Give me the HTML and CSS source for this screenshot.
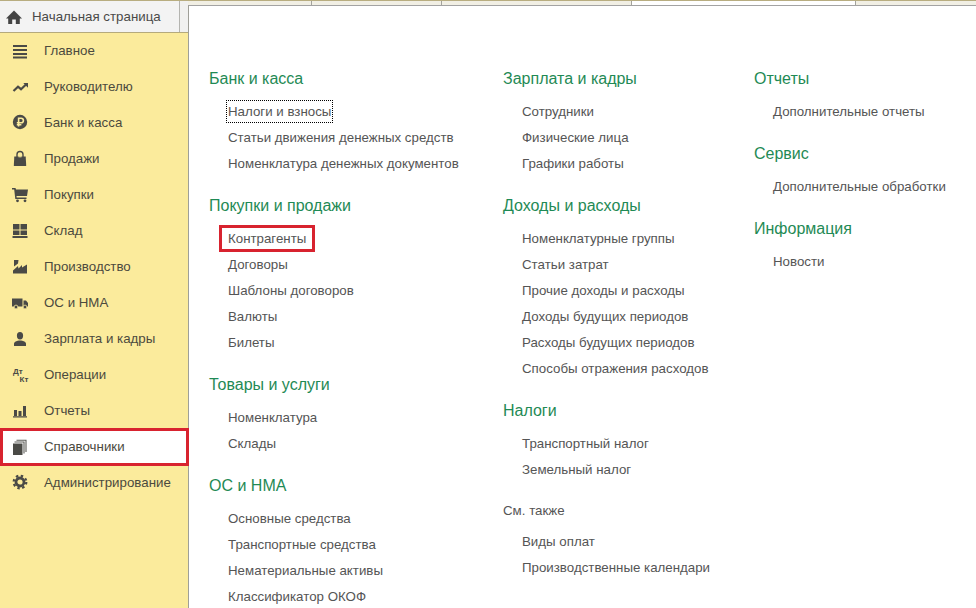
FILE: index.html
```html
<!DOCTYPE html>
<html lang="ru">
<head>
<meta charset="utf-8">
<title>Начальная страница</title>
<link rel="stylesheet" href="styles.css">
</head>
<body>
<div class="app">
  <div class="left">
    <div class="home-row">
      <div class="home-tab">
        <svg class="home-icon" viewBox="0 0 18 18"><path d="M9 2.5 17 10.5H14.8V16H10.8V11.5H7.2V16H3.2V10.5H1Z"/></svg>
        <span>Начальная страница</span>
      </div>
    </div>
    <nav class="side">
      <a class="side-item"><svg class="ico" viewBox="0 0 18 18"><path d="M2 4h14v2H2zM2 8h14v2H2zM2 12h14v2H2zM2 15.6h14v1.8H2z"/></svg><span>Главное</span></a>
      <a class="side-item"><svg class="ico" viewBox="0 0 18 18"><path class="ln" d="M2.5 14 7 9.7 10 12.2 15 7.5"/><path d="M12.3 6H17V10.7Z"/></svg><span>Руководителю</span></a>
      <a class="side-item"><svg class="ico" viewBox="0 0 18 18"><circle cx="9" cy="9" r="7.2"/><path class="ln-y" d="M7.6 13.5V5.2h2.5a2.3 2.3 0 0 1 0 4.6H5.8M5.8 11.7h4.6"/></svg><span>Банк и касса</span></a>
      <a class="side-item"><svg class="ico" viewBox="0 0 18 18"><path d="M3.300 7.500H14.700L15.200 17H2.800Z"/><path class="ln-thin" d="M6 10.500V5.500a3 3 0 0 1 6 0V10.500"/><path class="ln-y-thin" d="M7.500 7.800h3"/></svg><span>Продажи</span></a>
      <a class="side-item"><svg class="ico" viewBox="0 0 18 18"><path d="M1 3H4.500L5 4.500H17L16 11H5.500L5.700 12.500H15.500V14H4.300L3.200 4.500H1Z"/><circle cx="6.500" cy="15.800" r="1.400"/><circle cx="14" cy="15.800" r="1.400"/></svg><span>Покупки</span></a>
      <a class="side-item"><svg class="ico" viewBox="0 0 18 18"><path d="M2 3h6.500v5.500H2zM9.500 3H16v5.500H9.500zM2 9.500h6.500V14H2zM9.500 9.500H16V14H9.500zM1.500 15h15v2h-15z"/></svg><span>Склад</span></a>
      <a class="side-item"><svg class="ico" viewBox="0 0 18 18"><path d="M3 3H7.500L7 6.500 3 9.500ZM2 16.500V13.500L7 9 7.500 11.500 11 8V10.500L16 7.500V16.500Z"/></svg><span>Производство</span></a>
      <a class="side-item"><svg class="ico" viewBox="0 0 18 18"><path d="M1 5.500H11.500V13.500H1ZM12.500 7.500H15L17 10V13.500H12.500Z"/><circle class="wheel" cx="5" cy="14" r="1.900"/><circle class="wheel" cx="14" cy="14" r="1.900"/></svg><span>ОС и НМА</span></a>
      <a class="side-item"><svg class="ico" viewBox="0 0 18 18"><ellipse cx="9" cy="6.700" rx="3.100" ry="3.700"/><path d="M3 17V14.700C3 12.800 6 11.500 9 11.500S15 12.800 15 14.700V17Z"/></svg><span>Зарплата и кадры</span></a>
      <a class="side-item"><svg class="ico" viewBox="0 0 18 18"><text class="dk" x="2" y="9">Дт</text><text class="dk" x="8.500" y="17">Кт</text></svg><span>Операции</span></a>
      <a class="side-item"><svg class="ico" viewBox="0 0 18 18"><path d="M3 9h3v6H3zM7.500 10H10.500v5H7.500zM12 5h3v10h-3zM2 15.200h14v1.300H2z"/></svg><span>Отчеты</span></a>
      <a class="side-item side-marked"><svg class="ico" viewBox="0 0 18 18"><path d="M2 6.500H11.500V18H2Z"/><path class="ln-gray" d="M3.500 5H13V16.500M5.500 3.300H15V15"/></svg><span>Справочники</span></a>
      <a class="side-item"><svg class="ico" viewBox="0 0 18 18"><circle class="gear-a" cx="9" cy="9" r="4"/><circle class="gear-b" cx="9" cy="9" r="6.300"/></svg><span>Администрирование</span></a>
    </nav>
  </div>
  <div class="right">
    <div class="tabs">
      <div class="tab tab-1"></div>
      <div class="tab tab-2"></div>
      <div class="tab tab-3"></div>
      <div class="tab tab-active"></div>
      <div class="tab tab-rest"></div>
    </div>
    <main class="main">
      <div class="col col-1">
        <section class="group">
          <h3>Банк и касса</h3>
          <a class="link"><span class="focus">Налоги и взносы</span></a>
          <a class="link">Статьи движения денежных средств</a>
          <a class="link">Номенклатура денежных документов</a>
        </section>
        <section class="group">
          <h3>Покупки и продажи</h3>
          <a class="link"><span class="marked">Контрагенты</span></a>
          <a class="link">Договоры</a>
          <a class="link">Шаблоны договоров</a>
          <a class="link">Валюты</a>
          <a class="link">Билеты</a>
        </section>
        <section class="group">
          <h3>Товары и услуги</h3>
          <a class="link">Номенклатура</a>
          <a class="link">Склады</a>
        </section>
        <section class="group">
          <h3>ОС и НМА</h3>
          <a class="link">Основные средства</a>
          <a class="link">Транспортные средства</a>
          <a class="link">Нематериальные активы</a>
          <a class="link">Классификатор ОКОФ</a>
        </section>
      </div>
      <div class="col col-2">
        <section class="group">
          <h3>Зарплата и кадры</h3>
          <a class="link">Сотрудники</a>
          <a class="link">Физические лица</a>
          <a class="link">Графики работы</a>
        </section>
        <section class="group">
          <h3>Доходы и расходы</h3>
          <a class="link">Номенклатурные группы</a>
          <a class="link">Статьи затрат</a>
          <a class="link">Прочие доходы и расходы</a>
          <a class="link">Доходы будущих периодов</a>
          <a class="link">Расходы будущих периодов</a>
          <a class="link">Способы отражения расходов</a>
        </section>
        <section class="group">
          <h3>Налоги</h3>
          <a class="link">Транспортный налог</a>
          <a class="link">Земельный налог</a>
        </section>
        <section class="group group-also">
          <h4>См. также</h4>
          <a class="link">Виды оплат</a>
          <a class="link">Производственные календари</a>
        </section>
      </div>
      <div class="col col-3">
        <section class="group">
          <h3>Отчеты</h3>
          <a class="link">Дополнительные отчеты</a>
        </section>
        <section class="group">
          <h3>Сервис</h3>
          <a class="link">Дополнительные обработки</a>
        </section>
        <section class="group">
          <h3>Информация</h3>
          <a class="link">Новости</a>
        </section>
      </div>
    </main>
  </div>
</div>
</body>
</html>
```
FILE: styles.css
```css
* { box-sizing: border-box; }
html, body { margin: 0; padding: 0; }
body {
  width: 976px;
  height: 608px;
  overflow: hidden;
  background: #fff;
  font-family: "Liberation Sans", Arial, sans-serif;
  font-size: 13.3px;
}
.app {
  display: flex;
  width: 976px;
  height: 608px;
  border-top: 1px solid #b8ad80;
  overflow: hidden;
}
.left {
  width: 188px;
  flex: none;
  display: flex;
  flex-direction: column;
}
.home-row {
  height: 32px;
  flex: none;
  background: #f1f1f0;
  border-bottom: 1px solid #b5aa7c;
}
.home-tab {
  width: 180px;
  height: 31px;
  display: flex;
  align-items: center;
  gap: 9px;
  padding-left: 5px;
  color: #4a4a48;
  border-right: 1px solid #b4b4b0;
  background: #f3f3f3;
}
.home-icon { width: 18px; height: 18px; fill: #444; flex: none; }
.side {
  flex: 1;
  background: #fbeb9c;
  display: flex;
  flex-direction: column;
}
.side-item {
  position: relative;
  height: 36px;
  flex: none;
  display: flex;
  align-items: center;
  gap: 15px;
  padding: 0 0 2px 11px;
  color: #4b4a3e;
}
.side-marked { background: #fff; }
.side-marked::after {
  content: "";
  position: absolute;
  left: 0;
  right: -1px;
  top: -1px;
  bottom: -1px;
  border: 3px solid #d8232f;
}
.ico { width: 18px; height: 18px; flex: none; fill: #4a4a46; }
.ln { fill: none; stroke: #4a4a46; stroke-width: 2.2; }
.ln-thin { fill: none; stroke: #4a4a46; stroke-width: 1.4; }
.ln-y { fill: none; stroke: #fbeb9c; stroke-width: 1.6; }
.ln-y-thin { fill: none; stroke: #fbeb9c; stroke-width: 1; }
.ln-gray { fill: none; stroke: #5c5c58; stroke-width: 1.1; }
.wheel { stroke: #fbeb9c; stroke-width: 0.8; }
.dk { font-family: "Liberation Sans", sans-serif; font-size: 8px; font-weight: 700; }
.gear-a { fill: none; stroke: #4a4a46; stroke-width: 2.8; }
.gear-b { fill: none; stroke: #4a4a46; stroke-width: 2.2; stroke-dasharray: 2.45 2.5; }
.right {
  flex: 1;
  min-width: 0;
  display: flex;
  flex-direction: column;
}
.tabs {
  height: 4px;
  flex: none;
  display: flex;
}
.tab { height: 4px; background: #f1efe4; border-right: 1px solid #a3a39c; }
.tab-1 { width: 124px; }
.tab-2 { width: 130px; }
.tab-3 { width: 190px; }
.tab-active { width: 224px; background: #fff; }
.tab-rest { flex: 1; border-right: 0; }
.main {
  flex: 1;
  min-height: 0;
  display: flex;
  border-top: 1px solid #a3a3a3;
  border-left: 1px solid #9f9f98;
  padding: 60px 0 0 20px;
  background: #fff;
}
.col-1 { width: 294px; flex: none; }
.col-2 { width: 251px; flex: none; }
.col-3 { flex: 1; }
.group { margin-bottom: 16px; }
.group h3 {
  margin: 0 0 7px;
  font-size: 16px;
  line-height: 26px;
  font-weight: 400;
  color: #1f8a55;
}
.group h4 {
  margin: 0 0 5px;
  font-size: 13.3px;
  line-height: 26px;
  font-weight: 400;
  color: #555;
}
.group-also { margin-top: -1px; }
.link {
  display: block;
  height: 26px;
  line-height: 26px;
  padding-left: 19px;
  color: #555;
  white-space: nowrap;
}
.focus {
  display: inline-block;
  line-height: 21px;
  padding: 0 1px;
  margin-left: -1px;
  outline: 1px dotted #000;
}
.marked {
  display: inline-block;
  line-height: 21px;
  padding: 0 6px;
  margin-left: -6px;
  outline: 3px solid #d8232f;
}
```
